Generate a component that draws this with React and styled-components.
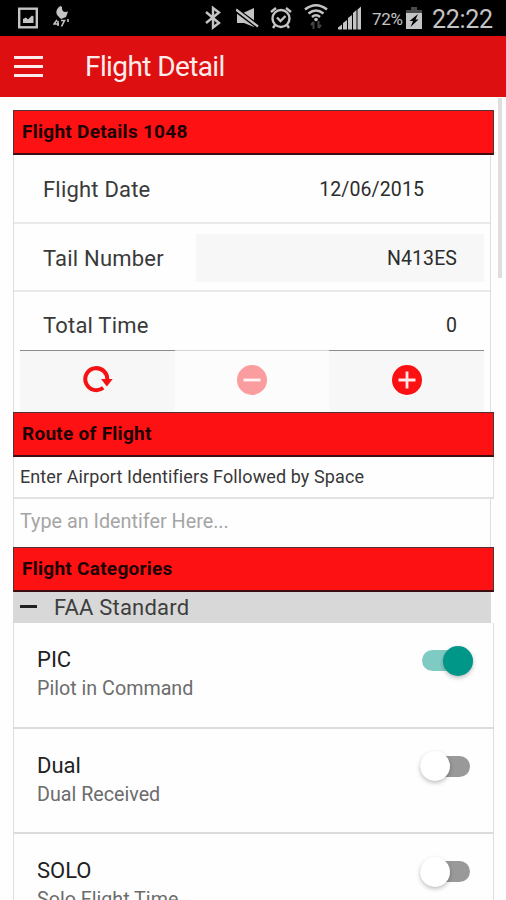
import React, { useState } from 'react';
import styled, { createGlobalStyle } from 'styled-components';

const GlobalStyle = createGlobalStyle`
  * { box-sizing: border-box; }
  body {
    margin: 0;
    background: #fefefe;
    font-family: Roboto, "Liberation Sans", sans-serif;
    overflow: hidden;
  }
`;

const Screen = styled.div`
  display: flex;
  flex-direction: column;
  width: 506px;
  height: 900px;
  overflow: hidden;
`;

const StatusBar = styled.div`
  flex: none;
  display: flex;
  align-items: center;
  height: 36px;
  padding: 0 13px 0 18px;
  background: #000;
  color: #c4c4c4;
`;

const StatusIcon = styled.svg`
  flex: none;
  display: block;
  width: ${(p) => p.$w}px;
  height: 36px;
  margin-right: ${(p) => p.$gap || 0}px;
`;

const Spacer = styled.div`
  flex: 1;
`;

const Battery = styled.span`
  width: 31px;
  margin-right: 3px;
  padding-top: 1px;
  font-size: 17px;
  letter-spacing: -0.3px;
  white-space: nowrap;
`;

const Clock = styled.span`
  width: 61px;
  font-size: 25px;
  letter-spacing: -0.3px;
  padding-top: 2px;
  white-space: nowrap;
`;

const AppBar = styled.header`
  flex: none;
  display: flex;
  align-items: center;
  height: 61px;
  padding-left: 14px;
  background: #dd0f10;
`;

const MenuButton = styled.button`
  display: flex;
  flex-direction: column;
  justify-content: space-between;
  width: 29px;
  height: 21px;
  padding: 0;
  border: 0;
  background: none;
`;

const MenuLine = styled.span`
  height: 3px;
  background: #fdeceb;
`;

const Title = styled.h1`
  margin: 0 0 0 42px;
  font-size: 28px;
  line-height: 32px;
  font-weight: 400;
  color: #fdeceb;
  letter-spacing: -0.6px;
`;

const Content = styled.div`
  flex: 1;
  display: flex;
  min-height: 0;
  padding: 1px 4px 0 13px;
  justify-content: space-between;
`;

const Form = styled.main`
  width: 481px;
  padding-top: 12px;
`;

const ScrollThumb = styled.div`
  width: 4px;
  height: 180px;
  background: #dedede;
`;

const SectionHeader = styled.h2`
  margin: 0;
  height: 45px;
  padding-left: 8px;
  border: 1px solid #4e3434;
  border-bottom: 2px solid #3c0d10;
  background: #fd1113;
  color: #1d0203;
  font-size: 19px;
  line-height: 41px;
  font-weight: 700;
  letter-spacing: 0.27px;
`;

const Panel = styled.div`
  width: ${(p) => (p.$wide ? 481 : 478)}px;
  border: solid #dedede;
  border-width: 0 1px;
`;

const Row = styled.div`
  display: flex;
  align-items: center;
  justify-content: space-between;
  height: ${(p) => p.$height}px;
  padding: 2px 6px 0 29px;
  border-bottom: 2px solid #e9e9e9;
`;

const LastRow = styled(Row)`
  padding-top: 8px;
  border-bottom: 0;
`;

const Label = styled.label`
  font-size: 22px;
  letter-spacing: 0.2px;
  color: #3a3a3a;
`;

const Value = styled.span`
  padding-right: ${(p) => p.$inset}px;
  font-size: 19.5px;
  letter-spacing: 0.1px;
  color: #2c2c2c;
`;

const Field = styled.div`
  display: flex;
  align-items: center;
  justify-content: flex-end;
  width: 288px;
  height: 48px;
  background: #f7f7f7;
`;

const Stepper = styled.div`
  display: grid;
  grid-template-columns: 155px 154px 155px;
  height: 62px;
  margin-left: 6px;
`;

const StepButton = styled.button`
  display: flex;
  align-items: center;
  justify-content: center;
  padding: 0 0 4px;
  border: 0;
  border-top: 1px solid ${(p) => (p.disabled ? '#d4d4d4' : '#8e8e8e')};
  background: ${(p) => (p.disabled ? '#fcfcfc' : '#f7f7f7')};
  svg { display: block; opacity: ${(p) => (p.disabled ? 0.4 : 1)}; }
`;

const Hint = styled.p`
  margin: 0;
  height: 42px;
  padding-left: 6px;
  border-bottom: 2px solid #e2e2e2;
  font-size: 18px;
  line-height: 40px;
  letter-spacing: 0.1px;
  color: #383838;
`;

const IdentifierInput = styled.input`
  display: block;
  width: 100%;
  height: 48px;
  padding: 0 6px 4px;
  border: 0;
  outline: 0;
  background: transparent;
  font: 19.8px Roboto, sans-serif;
  &::placeholder { color: #a5a5a5; opacity: 1; }
`;

const GroupBar = styled.div`
  display: flex;
  align-items: center;
  width: 478px;
  height: 31px;
  padding: 0 0 0 7px;
  background: #d8d8d8;
  color: #3e3e3e;
  font-size: 22px;
  letter-spacing: 0.2px;
`;

const CollapseMark = styled.span`
  width: 17px;
  height: 3px;
  margin: 0 17px 2px 0;
  background: #222;
`;

const Category = styled.div`
  display: flex;
  justify-content: space-between;
  height: 105.5px;
  padding: 23px 20px 0 23px;
  border-bottom: 2px solid #dcdcdc;
`;

const CategoryName = styled.div`
  font-size: 22px;
  line-height: 28px;
  color: #222;
`;

const CategoryNote = styled.div`
  font-size: 19.7px;
  line-height: 29px;
  color: #6c6c6c;
`;

const Switch = styled.button`
  display: flex;
  align-items: center;
  justify-content: ${(p) => (p.$on ? 'flex-end' : 'flex-start')};
  width: ${(p) => (p.$on ? 51 : 50)}px;
  height: 21px;
  margin: 4px ${(p) => (p.$on ? 0 : 3)}px 0 0;
  border: 0;
  padding: 0;
  border-radius: 11px;
  background: ${(p) => (p.$on ? '#7fcbc3' : '#999')};
`;

const Knob = styled.span`
  flex: none;
  width: 30px;
  height: 30px;
  border-radius: 50%;
  background: ${(p) => (p.$on ? '#009688' : '#fff')};
  box-shadow: 0 2px 4px rgba(0, 0, 0, 0.25);
`;

const categories = [
  { name: 'PIC', note: 'Pilot in Command', on: true },
  { name: 'Dual', note: 'Dual Received', on: false },
  { name: 'SOLO', note: 'Solo Flight Time', on: false },
];

function StatusIcons() {
  return (
    <>
      <StatusIcon $w={20} $gap={15} viewBox="0 0 20 36" fill="none" stroke="currentColor">
        <rect x="1.2" y="8.7" width="17.6" height="18.6" strokeWidth="2.4" />
        <path d="M5 23v-4l3-1.500 2 2 4-4 1.500 1v6.500z" fill="currentColor" stroke="none" />
      </StatusIcon>
      <StatusIcon $w={17} viewBox="0 0 17 36" fill="currentColor">
        <path d="M7.500 6C3 8.500 2 13.500 5.500 16.500L8 19l5-2 2-5.500C11 13 8.500 11 9 7z" />
        <path d="M4 20l-3 4h5m-1-3v5M8 20.500h3.500l-3 6M15 19v3" fill="none" stroke="currentColor" strokeWidth="1.600" />
      </StatusIcon>
      <Spacer />
      <StatusIcon $w={16} $gap={15} viewBox="0 0 16 36" fill="none" stroke="currentColor" strokeWidth="2.400">
        <path d="M1 12l13 11-6 4.500V8l6 4.500L1 23" />
      </StatusIcon>
      <StatusIcon $w={23} $gap={11} viewBox="0 0 23 36">
        <path d="M1 13h6l11-5v19L8 23H1z" fill="currentColor" />
        <path d="M0 10l23 17" stroke="#000" strokeWidth="5" />
        <path d="M0 9.500l22 17" stroke="currentColor" strokeWidth="2.300" />
      </StatusIcon>
      <StatusIcon $w={22} $gap={12} viewBox="0 0 22 36" fill="none" stroke="currentColor" strokeWidth="2.400">
        <circle cx="11" cy="18.500" r="8.500" />
        <path d="M1 12l5-4M21 12l-5-4M7 17.500l3.500 3.500 5-5M5 25l-2 3M17 25l2 3" />
      </StatusIcon>
      <StatusIcon $w={24} $gap={10} viewBox="0 0 24 36" fill="none" stroke="currentColor" strokeWidth="2.600">
        <path d="M1 9.500q11-8.500 22 0M4.500 13.500q7.500-6 15 0M8 17q4-3.500 8 0" />
        <circle cx="12" cy="19.500" r="1.800" fill="currentColor" stroke="none" />
        <path d="M9.500 29v-7m-2.500 3l2.500-3M14.500 21v7m2.500-3l-2.500 3" stroke="#444" strokeWidth="2" />
      </StatusIcon>
      <StatusIcon $w={24} $gap={10} viewBox="0 0 24 36" fill="currentColor">
        <path d="M0 29.500v-2l4-3v5zM5 29.500V23l4-3v9.500zM10 29.500V18l4-3v14.500zM15 29.500V13l3.500-3v19.500zM19.500 29.500V9.500l3.500-3v23z" />
      </StatusIcon>
    </>
  );
}

function StepIcon({ kind }) {
  if (kind === 'reload') {
    return (
      <svg width="30" height="28" viewBox="0 0 30 28">
        <path d="M20.200 21.700A11 11 0 1 1 24.200 14.500" fill="none" stroke="#f51215" strokeWidth="4" />
        <path d="M18 13h11.700l-5.800 7.500z" fill="#f51215" />
      </svg>
    );
  }
  return (
    <svg width="30" height="30" viewBox="0 0 30 30">
      <circle cx="15" cy="15" r="15" fill="#fb1013" />
      <path d={kind === 'plus' ? 'M6.500 15h17M15 6.500v17' : 'M6.500 15h17'} stroke="#ffe9e9" strokeWidth="2.800" />
    </svg>
  );
}

function CategoryRow({ name, note, on: initial }) {
  const [on, setOn] = useState(initial);
  return (
    <Category>
      <div>
        <CategoryName>{name}</CategoryName>
        <CategoryNote>{note}</CategoryNote>
      </div>
      <Switch $on={on} role="switch" aria-checked={on} aria-label={name} onClick={() => setOn(!on)}>
        <Knob $on={on} />
      </Switch>
    </Category>
  );
}

export default function App() {
  return (
    <Screen>
      <GlobalStyle />
      <StatusBar>
        <StatusIcons />
        <Battery>72%</Battery>
        <StatusIcon $w={16} $gap={10} viewBox="0 0 16 36">
          <path d="M5 7h6v3h5v4H0v-4h5z" fill="#4a4a4a" />
          <path d="M0 13h16v16H0z" fill="currentColor" />
          <path d="M12 14l-8.500 7H7l-2.500 6 8-7.500H9.500z" fill="#000" />
        </StatusIcon>
        <Clock>22:22</Clock>
      </StatusBar>
      <AppBar>
        <MenuButton aria-label="Menu">
          <MenuLine />
          <MenuLine />
          <MenuLine />
        </MenuButton>
        <Title>Flight Detail</Title>
      </AppBar>
      <Content>
        <Form>
          <SectionHeader>Flight Details 1048</SectionHeader>
          <Panel>
            <Row $height={69}>
              <Label>Flight Date</Label>
              <Value $inset={60}>12/06/2015</Value>
            </Row>
            <Row $height={68}>
              <Label>Tail Number</Label>
              <Field>
                <Value $inset={27}>N413ES</Value>
              </Field>
            </Row>
            <LastRow $height={58}>
              <Label>Total Time</Label>
              <Value $inset={27}>0</Value>
            </LastRow>
            <Stepper>
              <StepButton aria-label="Reset"><StepIcon kind="reload" /></StepButton>
              <StepButton aria-label="Decrease" disabled><StepIcon kind="minus" /></StepButton>
              <StepButton aria-label="Increase"><StepIcon kind="plus" /></StepButton>
            </Stepper>
          </Panel>
          <SectionHeader>Route of Flight</SectionHeader>
          <Panel $wide>
            <Hint>Enter Airport Identifiers Followed by Space</Hint>
          </Panel>
          <Panel>
            <IdentifierInput placeholder="Type an Identifer Here..." />
          </Panel>
          <SectionHeader>Flight Categories</SectionHeader>
          <GroupBar>
            <CollapseMark />
            FAA Standard
          </GroupBar>
          <Panel $wide>
            {categories.map((c) => (
              <CategoryRow key={c.name} {...c} />
            ))}
          </Panel>
        </Form>
        <ScrollThumb />
      </Content>
    </Screen>
  );
}
